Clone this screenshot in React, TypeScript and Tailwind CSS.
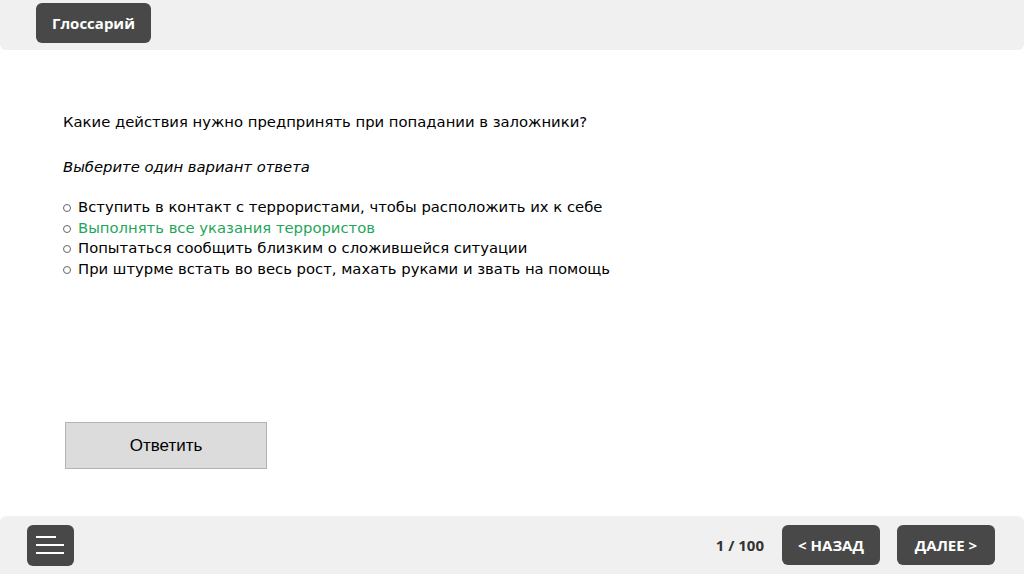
export default function App() {
  const options = [
    { text: 'Вступить в контакт с террористами, чтобы расположить их к себе', correct: false },
    { text: 'Выполнять все указания террористов', correct: true },
    { text: 'Попытаться сообщить близким о сложившейся ситуации', correct: false },
    { text: 'При штурме встать во весь рост, махать руками и звать на помощь', correct: false },
  ];

  return (
    <div className="w-[1024px] h-[574px] bg-white flex flex-col overflow-hidden" style={{ fontFamily: '"DejaVu Sans", sans-serif' }}>
      {/* top bar */}
      <div className="h-[50px] bg-[#f0f0f0] rounded-b-md flex items-start pl-[36px] pt-[3px]">
        <button className="w-[115px] h-[40px] bg-[#484848] rounded-md text-white text-[15px] font-bold" style={{ fontFamily: '"Open Sans", sans-serif' }}>
          Глоссарий
        </button>
      </div>

      {/* content */}
      <div className="flex-1 flex flex-col pl-[63px] pt-[62px]">
        <div className="text-[14.8px] leading-[20px] text-black">
          Какие действия нужно предпринять при попадании в заложники?
        </div>
        <div className="mt-[25px] text-[14.8px] leading-[20px] italic text-black">Выберите один вариант ответа</div>
        <div className="mt-[20px] flex flex-col">
          {options.map((o) => (
            <div key={o.text} className={`flex items-center text-[14.8px] leading-[20.5px] ${o.correct ? 'text-[#1fa65a]' : 'text-black'}`}>
              <span className="w-[15px] flex items-center">
                <span className="block w-[8px] h-[8px] rounded-full border border-[#666] mt-[2px]" />
              </span>
              {o.text}
            </div>
          ))}
        </div>
        <button
          className="mt-[143px] ml-[2px] w-[202px] h-[47px] bg-[#dcdcdc] border border-[#b3b3b3] text-[17px] text-black"
          style={{ fontFamily: '"Liberation Sans", sans-serif' }}
        >
          Ответить
        </button>
      </div>

      {/* bottom bar */}
      <div className="h-[58px] bg-[#f0f0f0] rounded-t-md flex items-center px-[27px]" style={{ fontFamily: '"Open Sans", sans-serif' }}>
        <button className="w-[47px] h-[41px] bg-[#484848] rounded-md flex flex-col items-start justify-center gap-[6px] pl-[9px]">
          <span className="block w-[20px] h-[2px] bg-white" />
          <span className="block w-[28px] h-[2px] bg-white" />
          <span className="block w-[28px] h-[2px] bg-white" />
        </button>
        <div className="flex-1" />
        <span className="text-[15px] font-bold text-[#333] mr-[18px]">1 / 100</span>
        <button className="w-[98px] h-[40px] bg-[#484848] rounded-md text-white text-[15px] font-bold mr-[17px]">&lt; НАЗАД</button>
        <button className="w-[98px] h-[40px] bg-[#484848] rounded-md text-white text-[15px] font-bold mr-[2px]">ДАЛЕЕ &gt;</button>
      </div>
    </div>
  );
}
